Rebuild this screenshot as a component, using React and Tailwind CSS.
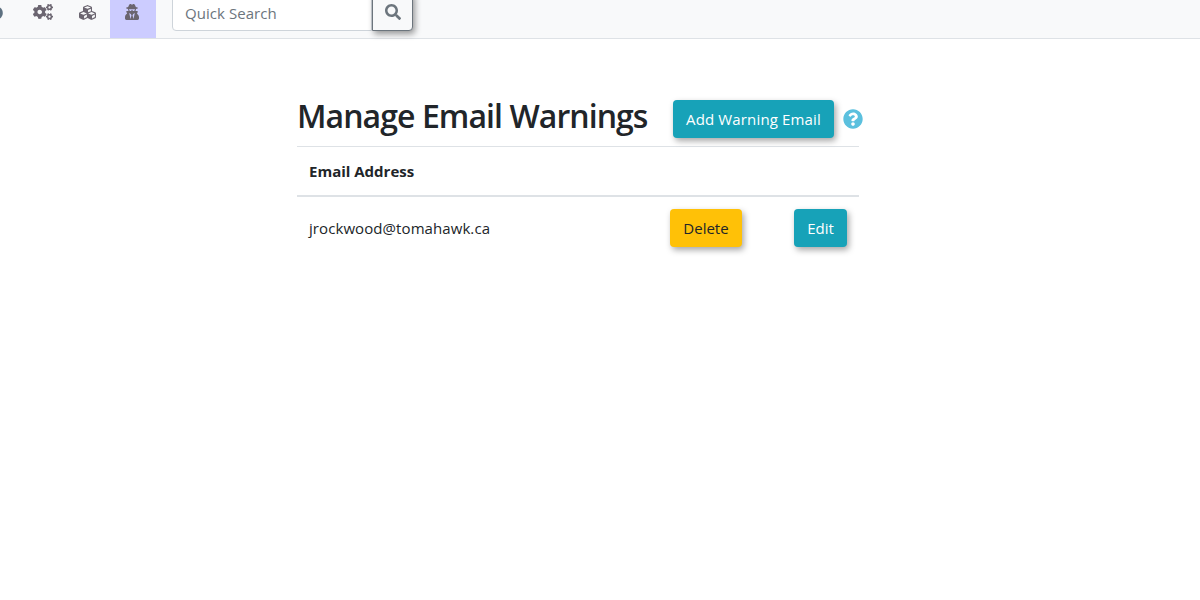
import { FaCogs, FaCubes, FaUserSecret, FaSearch, FaQuestionCircle, FaCircle } from "react-icons/fa";

function NavIcon({ children, active }) {
  return (
    <div className={`flex h-[38px] w-[46px] items-center justify-center pb-[14px] text-[#6b6570] ${active ? "bg-[#ccccff]" : ""}`}>
      {children}
    </div>
  );
}

export default function App() {
  return (
    <div className="min-h-[600px] bg-white font-['Open_Sans',sans-serif] text-[#212529]">
      <nav className="flex h-[39px] items-start border-b border-[#dee2e6] bg-[#f8f9fa]">
        <div className="ml-[-11px] flex h-[38px] w-[14px] items-center pb-[13px] text-[#5d7080]">
          <FaCircle className="h-[14px] w-[14px] shrink-0" />
        </div>
        <div className="ml-[15px] flex">
          <NavIcon><FaCogs className="ml-[4px] h-[20px] w-[20px]" /></NavIcon>
          <NavIcon><FaCubes className="h-[17px] w-[17px]" /></NavIcon>
          <NavIcon active><FaUserSecret className="mr-[2px] h-[16px] w-[16px]" /></NavIcon>
        </div>
        <div className="ml-[16px] mt-[-8px] flex">
          <input
            readOnly
            placeholder="Quick Search"
            className="h-[39px] w-[200px] rounded-l border border-[#ced4da] bg-white px-3 pt-[3px] text-[15px] tracking-[0.05px] outline-none placeholder:text-[#6c757d]"
          />
          <button className="flex h-[39px] w-[41px] items-center justify-center rounded-r border border-[#6c757d] bg-[#f8f9fa] text-[#6c757d] shadow-[2px_3px_6px_rgba(0,0,0,0.4)]">
            <FaSearch className="mt-[1px] h-[16px] w-[16px]" />
          </button>
        </div>
      </nav>

      <main className="ml-[297px] w-[562px] pt-[58px]">
        <div className="flex h-[49px] items-start">
          <h1 className="text-[32px] leading-[38px] font-semibold tracking-[-0.93px] whitespace-nowrap">Manage Email Warnings</h1>
          <button className="ml-auto mt-[3px] h-[38px] w-[161px] rounded bg-[#17a2b8] text-[15px] tracking-[0.15px] text-white shadow-[2px_3px_6px_rgba(0,0,0,0.35)]">
            Add Warning Email
          </button>
          <FaQuestionCircle className="mt-[12px] ml-[9px] mr-[-4px] h-[20px] w-[20px] shrink-0 text-[#5bc0de]" />
        </div>
        <div className="flex h-[51px] items-center border-y border-t-[#dee2e6] border-b-2 border-b-[#dee2e6] px-3 text-[15px] font-bold">
          Email Address
        </div>
        <div className="flex h-[64px] items-center pl-3 pr-3 pb-[2px]">
          <span className="text-[15px] tracking-[0.08px]">jrockwood@tomahawk.ca</span>
          <button className="ml-auto h-[38px] w-[72px] rounded bg-[#ffc107] text-[15px] text-[#212529] shadow-[2px_3px_6px_rgba(0,0,0,0.35)]">
            Delete
          </button>
          <button className="ml-[52px] h-[38px] w-[53px] rounded bg-[#17a2b8] text-[15px] text-white shadow-[2px_3px_6px_rgba(0,0,0,0.35)]">
            Edit
          </button>
        </div>
      </main>
    </div>
  );
}
